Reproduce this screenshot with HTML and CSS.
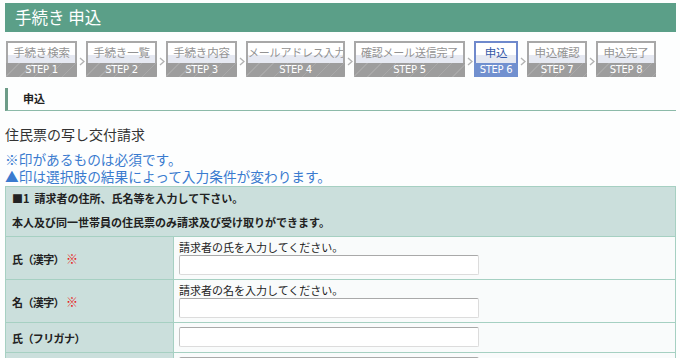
FILE: index.html
```html
<!DOCTYPE html>
<html lang="ja">
<head>
<meta charset="utf-8">
<title>手続き 申込</title>
<link rel="stylesheet" href="styles.css">
</head>
<body>
<div class="page">
  <h1 class="title-bar">手続き 申込</h1>

  <ol class="steps">
    <li class="step step-w1"><span class="step-label">手続き検索</span><span class="step-num">STEP 1</span></li>
    <li class="arrow"><svg width="6" height="9" viewBox="0 0 6 9"><path d="M1 1 L5 4.5 L1 8" fill="none" stroke="#b4b4b4" stroke-width="1.4"/></svg></li>
    <li class="step step-w1"><span class="step-label">手続き一覧</span><span class="step-num">STEP 2</span></li>
    <li class="arrow"><svg width="6" height="9" viewBox="0 0 6 9"><path d="M1 1 L5 4.5 L1 8" fill="none" stroke="#b4b4b4" stroke-width="1.4"/></svg></li>
    <li class="step step-w1"><span class="step-label">手続き内容</span><span class="step-num">STEP 3</span></li>
    <li class="arrow"><svg width="6" height="9" viewBox="0 0 6 9"><path d="M1 1 L5 4.5 L1 8" fill="none" stroke="#b4b4b4" stroke-width="1.4"/></svg></li>
    <li class="step step-w4"><span class="step-label">メールアドレス入力</span><span class="step-num">STEP 4</span></li>
    <li class="arrow"><svg width="6" height="9" viewBox="0 0 6 9"><path d="M1 1 L5 4.5 L1 8" fill="none" stroke="#b4b4b4" stroke-width="1.4"/></svg></li>
    <li class="step step-w5"><span class="step-label">確認メール送信完了</span><span class="step-num">STEP 5</span></li>
    <li class="arrow"><svg width="6" height="9" viewBox="0 0 6 9"><path d="M1 1 L5 4.5 L1 8" fill="none" stroke="#b4b4b4" stroke-width="1.4"/></svg></li>
    <li class="step step-w6 is-current"><span class="step-label">申込</span><span class="step-num">STEP 6</span></li>
    <li class="arrow"><svg width="6" height="9" viewBox="0 0 6 9"><path d="M1 1 L5 4.5 L1 8" fill="none" stroke="#b4b4b4" stroke-width="1.4"/></svg></li>
    <li class="step step-w7"><span class="step-label">申込確認</span><span class="step-num">STEP 7</span></li>
    <li class="arrow"><svg width="6" height="9" viewBox="0 0 6 9"><path d="M1 1 L5 4.5 L1 8" fill="none" stroke="#b4b4b4" stroke-width="1.4"/></svg></li>
    <li class="step step-w7"><span class="step-label">申込完了</span><span class="step-num">STEP 8</span></li>
  </ol>

  <h2 class="section-title">申込</h2>

  <p class="form-name">住民票の写し交付請求</p>
  <p class="note">※印があるものは必須です。</p>
  <p class="note">▲印は選択肢の結果によって入力条件が変わります。</p>

  <table class="form-table">
    <tr>
      <th class="group-head" colspan="2">
        <span class="group-line group-line-first">■1&nbsp;&nbsp;請求者の住所、氏名等を入力して下さい。</span>
        <span class="group-line group-line-second">本人及び同一世帯員の住民票のみ請求及び受け取りができます。</span>
      </th>
    </tr>
    <tr class="row-tall">
      <th class="label">氏（漢字）<span class="req">※</span></th>
      <td class="value"><div class="hint">請求者の氏を入力してください。</div><input class="text-input" type="text"></td>
    </tr>
    <tr class="row-tall">
      <th class="label">名（漢字）<span class="req">※</span></th>
      <td class="value"><div class="hint">請求者の名を入力してください。</div><input class="text-input" type="text"></td>
    </tr>
    <tr class="row-short">
      <th class="label">氏（フリガナ）</th>
      <td class="value"><input class="text-input" type="text"></td>
    </tr>
    <tr class="row-short">
      <th class="label">名（フリガナ）</th>
      <td class="value"><input class="text-input" type="text"></td>
    </tr>
  </table>
</div>
</body>
</html>
```

FILE: styles.css
```css
* { box-sizing: border-box; }
html, body { margin: 0; padding: 0; background: #fdfefe; }
body {
  font-family: "Noto Sans CJK JP", "Noto Sans", sans-serif;
  color: #222;
}
.page {
  padding: 3px 4px 0 5px;
}
.title-bar {
  margin: 0;
  height: 29px;
  line-height: 29px;
  background: #5b9f88;
  color: #fff;
  font-size: 16.5px;
  font-weight: normal;
  padding-left: 10px;
}
.steps {
  list-style: none;
  margin: 9px 0 0 1px;
  padding: 0;
  display: flex;
  align-items: center;
}
.step {
  display: flex;
  flex-direction: column;
  height: 36px;
}
.step-w1 { width: 71px; }
.step-w4 { width: 99px; }
.step-w5 { width: 111px; }
.step-w6 { width: 44px; }
.step-w7 { width: 60px; }
.step-label {
  height: 22px;
  border: 2px solid #a8a8a8;
  border-bottom: none;
  background: linear-gradient(#ffffff 0, #ffffff 62%, #e6e9f2 62%, #e6e9f2 100%);
  color: #939393;
  font-size: 11.5px;
  line-height: 19px;
  text-align: center;
  white-space: nowrap;
  overflow: hidden;
  letter-spacing: -0.2px;
}
.step-w4 .step-label, .step-w5 .step-label { font-size: 11px; }
.step-num {
  height: 14px;
  background: #9d9d9d repeating-linear-gradient(135deg, rgba(255,255,255,0) 0 9px, rgba(255,255,255,0.12) 9px 10px);
  color: #fff;
  font-size: 10px;
  line-height: 14px;
  text-align: center;
  font-family: "DejaVu Sans", sans-serif;
  letter-spacing: -0.3px;
}
.step.is-current .step-label {
  border-color: #6f89cc;
  color: #3557a8;
}
.step.is-current .step-num {
  background: #7190cf;
}
.arrow {
  width: 9px;
  height: 36px;
  display: flex;
  align-items: center;
  justify-content: center;
  padding-top: 4px;
}
.arrow svg { display: block; }

.section-title {
  margin: 11px 0 0 0;
  height: 23px;
  border-left: 3px solid #6d9c88;
  border-bottom: 1px solid #8cbaa9;
  padding-left: 15px;
  font-size: 11px;
  font-weight: bold;
  line-height: 21px;
  color: #222;
}
.form-name {
  margin: 14px 0 0 0;
  font-size: 14px;
  line-height: 18px;
  color: #333;
}
.note {
  margin: 0;
  font-size: 13.7px;
  line-height: 17px;
  color: #3a7bcf;
  white-space: nowrap;
}
.form-name + .note { margin-top: 8px; }

.form-table {
  width: 671px;
  border-collapse: collapse;
  margin-top: 1px;
  font-size: 11px;
}
.form-table th, .form-table td {
  border: 1px solid #a6d0c2;
  padding: 0;
}
.group-head {
  background: #cbdfdc;
  text-align: left;
  font-weight: bold;
  padding: 0 0 0 6px !important;
  height: 49px;
}
.group-line {
  display: block;
}
.group-line-first { height: 22px; line-height: 22px; }
.group-line-second { height: 27px; line-height: 27px; }
.label {
  width: 168px;
  background: #cbdfdc;
  text-align: left;
  font-weight: bold;
  padding-left: 6px !important;
  white-space: nowrap;
  letter-spacing: -0.6px;
}
.req {
  color: #e81818;
  margin-left: 2px;
  font-weight: bold;
  font-size: 12px;
  letter-spacing: 0;
}
.value {
  background: #f9fbfb;
  padding: 3px 0 4px 5px !important;
  vertical-align: top;
}
.row-tall { height: 43px; }
.row-short { height: 30px; }
.row-short .value { padding-top: 4px !important; }
.hint {
  font-size: 11px;
  line-height: 14px;
  height: 15px;
  color: #222;
}
.text-input {
  display: block;
  width: 300px;
  height: 20px;
  margin: 0;
  border: 1px solid #dcdcdc;
  border-top-color: #a9a9a9;
  border-left-color: #c4c4c4;
  border-radius: 2px;
  background: #fff;
}
```
